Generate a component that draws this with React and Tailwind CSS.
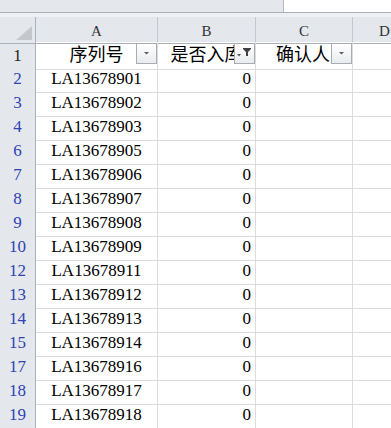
import React from "react";

const rows = [
  [2, "LA13678901"],
  [3, "LA13678902"],
  [4, "LA13678903", true],
  [6, "LA13678905"],
  [7, "LA13678906"],
  [8, "LA13678907"],
  [9, "LA13678908"],
  [10, "LA13678909", true],
  [12, "LA13678911"],
  [13, "LA13678912"],
  [14, "LA13678913"],
  [15, "LA13678914", true],
  [17, "LA13678916"],
  [18, "LA13678917"],
  [19, "LA13678918"],
];

const grid = "grid grid-cols-[36px_122px_98px_97px_64px]";
const serif = "font-['Liberation_Serif','Times_New_Roman',serif]";
const cjk = "font-['Liberation_Serif','Noto_Sans_CJK_SC',sans-serif]";

function FilterButton({ active }) {
  return (
    <div className="absolute right-0 top-[1px] w-[21px] h-[21px] border border-[#a7acb3] bg-gradient-to-b from-white to-[#e9ebee] flex items-center justify-center">
      {active ? (
        <svg width="19" height="19" viewBox="0 0 19 19">
          <polygon points="2,10 6,10 4,12.5" fill="#555" />
          <polygon points="8,4 16,4 16,5 13,8 13,12 11,12 11,8 8,5" fill="#3f3f3f" />
        </svg>
      ) : (
        <svg width="19" height="19" viewBox="0 0 19 19">
          <polygon points="7,8 12,8 9.5,10.5" fill="#5a5a5a" />
        </svg>
      )}
    </div>
  );
}

export default function App() {
  return (
    <div className={`w-[391px] h-[428px] overflow-hidden bg-white ${serif}`}>
      <div className="flex h-[13px] border-b border-[#aab0b8]">
        <div className="w-[284px] bg-[#e4e7eb] border-r border-[#b5bac1]" />
        <div className="flex-1 bg-white" />
      </div>
      <div className="h-[4px] bg-[#eef0f3]" />
      <div className={`${grid} h-[25px] bg-[#e4e8ed] text-[15px] text-[#333]`}>
        <div className="relative border-r border-b border-[#aab1ba] bg-[#e4e8ed]">
          <svg className="absolute right-[3px] bottom-[3px]" width="16" height="14" viewBox="0 0 16 14">
            <polygon points="16,0 16,14 0,14" fill="#c4c8cd" />
          </svg>
        </div>
        {["A", "B", "C", "D"].map((c) => (
          <div key={c} className="flex items-center justify-center border-r border-b border-[#c3c8cf] border-b-[#aab1ba] pt-[3px]">
            {c}
          </div>
        ))}
      </div>
      <div className={`${grid} h-[24px] text-[17px]`}>
        <div className="flex items-center justify-center bg-[#e4e8ed] border-r border-b border-[#c6cbd1] border-r-[#aab1ba] text-[#222]">1</div>
        <div className="relative border-r border-b border-[#dadcdf]">
          <div className={`h-full flex items-center justify-center text-[18px] text-black ${cjk}`}>序列号</div>
          <FilterButton />
        </div>
        <div className="relative border-r border-b border-[#dadcdf] overflow-hidden">
          <div className={`h-full flex items-center justify-center text-[18px] text-black whitespace-nowrap ${cjk}`}>是否入库</div>
          <FilterButton active />
        </div>
        <div className="relative border-r border-b border-[#dadcdf]">
          <div className={`h-full flex items-center justify-center pr-[2px] text-[18px] text-black ${cjk}`}>确认人</div>
          <FilterButton />
        </div>
        <div className="border-b border-[#dadcdf]" />
      </div>
      {rows.map(([n, id, hidden]) => (
        <div key={n} className={`${grid} h-[24px] text-[17px]`}>
          <div
            className={`flex items-center justify-center bg-[#e4e8ed] border-r border-b border-r-[#aab1ba] text-[#2f42b3] ${
              hidden ? "border-b-[#8e97a4]" : "border-b-[#c6cbd1]"
            }`}
          >
            {n}
          </div>
          <div className="flex items-center justify-center border-r border-b border-[#dadcdf] text-black">{id}</div>
          <div className="flex items-center justify-end pr-[4px] border-r border-b border-[#dadcdf] text-black">0</div>
          <div className="border-r border-b border-[#dadcdf]" />
          <div className="border-b border-[#dadcdf]" />
        </div>
      ))}
    </div>
  );
}
